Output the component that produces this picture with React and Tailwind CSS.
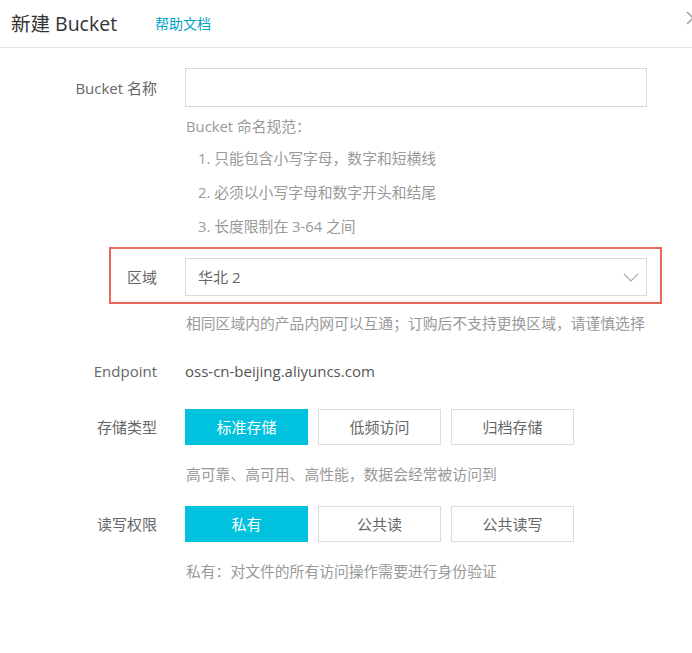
const font = { fontFamily: '"Open Sans", "Noto Sans CJK SC", sans-serif' };

function Row({ label, children, className = "" }) {
  return (
    <div className={`flex items-center ${className}`}>
      <div className="w-[157px] shrink-0 text-right text-[15px] leading-[20px] text-[#666]">{label}</div>
      <div className="ml-[28px] w-[462px]">{children}</div>
    </div>
  );
}

function Hint({ children, className = "" }) {
  return (
    <div className={`ml-[186px] text-[14.8px] leading-[20px] text-[#999] ${className}`}>{children}</div>
  );
}

function Choice({ items, active, className = "" }) {
  return (
    <div className={`flex gap-[10px] ${className}`}>
      {items.map((t) => (
        <button
          key={t}
          className={
            t === active
              ? "w-[123px] h-[36px] bg-[#00c1de] text-white text-[15px]"
              : "w-[123px] h-[36px] border border-[#dcdcdc] bg-white text-[#666] text-[15px]"
          }
        >
          {t}
        </button>
      ))}
    </div>
  );
}

export default function App() {
  return (
    <div className="relative w-[692px] h-[653px] overflow-hidden bg-white" style={font}>
      <div className="relative h-[48px] border-b border-[#e5e5e5] flex items-center pl-[11px]">
        <span className="text-[19.5px] text-[#333] leading-none">新建 Bucket</span>
        <a href="#" className="ml-[38px] text-[14px] text-[#00a2ca]">帮助文档</a>
        <svg className="absolute left-[686px] top-[11px]" width="14" height="14" viewBox="0 0 14 14">
          <path d="M1 1 L13 13 M13 1 L1 13" stroke="#999" strokeWidth="1.3" fill="none" />
        </svg>
      </div>

      <Row label="Bucket 名称" className="mt-[20px]">
        <div className="h-[39px] border border-[#d9d9d9]" />
      </Row>

      <Hint className="mt-[9px]">Bucket 命名规范：</Hint>
      <Hint className="mt-[12px] pl-[12px]">1. 只能包含小写字母，数字和短横线</Hint>
      <Hint className="mt-[14px] pl-[12px]">2. 必须以小写字母和数字开头和结尾</Hint>
      <Hint className="mt-[14px] pl-[12px]">3. 长度限制在 3-64 之间</Hint>

      <div className="relative mt-[22px]">
        <Row label="区域">
          <div className="h-[38px] border border-[#d9d9d9] flex items-center justify-between pl-[12px] pr-[7px] text-[15px] text-[#666]">
            <span>华北 2</span>
            <svg width="16" height="9" viewBox="0 0 16 9">
              <path d="M1 1 L8 8 L15 1" stroke="#aaa" strokeWidth="1.2" fill="none" />
            </svg>
          </div>
        </Row>
        <div className="absolute left-[109px] top-[-11px] w-[553px] h-[57px] border-2 border-[#e8665c]" />
      </div>

      <Hint className="mt-[17px]">相同区域内的产品内网可以互通；订购后不支持更换区域，请谨慎选择</Hint>

      <Row label="Endpoint" className="mt-[26px]">
        <span className="text-[15px] text-[#555] leading-[20px]">oss-cn-beijing.aliyuncs.com</span>
      </Row>

      <Row label="存储类型" className="mt-[26px]">
        <Choice items={["标准存储", "低频访问", "归档存储"]} active="标准存储" />
      </Row>
      <Hint className="mt-[19px]">高可靠、高可用、高性能，数据会经常被访问到</Hint>

      <Row label="读写权限" className="mt-[22px]">
        <Choice items={["私有", "公共读", "公共读写"]} active="私有" />
      </Row>
      <Hint className="mt-[19px]">私有：对文件的所有访问操作需要进行身份验证</Hint>
    </div>
  );
}
